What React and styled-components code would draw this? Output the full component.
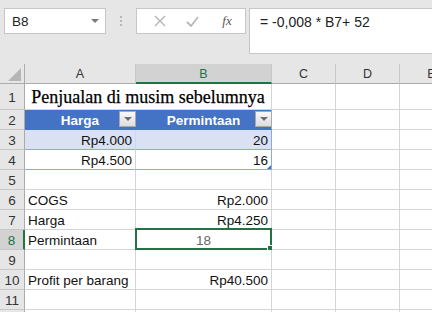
import React from "react";
import styled, { createGlobalStyle } from "styled-components";

const GlobalStyle = createGlobalStyle`
  html, body {
    margin: 0;
    padding: 0;
    background: #ffffff;
    overflow: hidden;
  }
  * { box-sizing: border-box; }
`;

const Window = styled.div`
  width: 432px;
  height: 312px;
  overflow: hidden;
  font-family: "Liberation Sans", Arial, sans-serif;
  background: #ffffff;
`;

const FormulaBar = styled.div`
  height: 64px;
  background: #e6e6e6;
  display: flex;
  align-items: flex-start;
  padding: 8px 0 0 4px;
`;

const NameBox = styled.div`
  width: 102px;
  height: 26px;
  background: #fff;
  border: 1px solid #c6c6c6;
  display: flex;
  align-items: center;
  justify-content: space-between;
  padding: 0 6px 0 7px;
  font-size: 13.5px;
  color: #222;
`;

const DropArrow = styled.span`
  width: 0;
  height: 0;
  border-left: 4px solid transparent;
  border-right: 4px solid transparent;
  border-top: 4px solid #7a7a7a;
`;

const Grip = styled.div`
  width: 30px;
  height: 26px;
  display: flex;
  flex-direction: column;
  align-items: center;
  justify-content: center;
  gap: 2px;

  span {
    width: 2px;
    height: 2px;
    background: #b8b8b8;
  }
`;

const FuncBox = styled.div`
  width: 110px;
  height: 26px;
  background: #fff;
  border: 1px solid #c6c6c6;
  display: flex;
  align-items: center;
  padding-left: 11px;
`;

const FuncButton = styled.span`
  width: ${(p) => p.$w}px;
  display: flex;
  justify-content: center;
  align-items: center;
  color: ${(p) => p.$color || "#b4b4b4"};
  font-family: "Liberation Serif", "Times New Roman", serif;
  font-style: italic;
  font-size: 13px;
`;

const FormulaInput = styled.div`
  margin-left: 3px;
  flex: 1;
  height: 46px;
  background: #fff;
  border: 1px solid #c6c6c6;
  border-right: none;
  padding: 5px 0 0 10px;
  font-size: 14px;
  color: #222;
  white-space: pre;
`;

const Sheet = styled.div`
  display: grid;
  grid-template-columns: 25px 111px 136px 64px 64px 64px;
  grid-template-rows: 20px 26px repeat(11, 20px);
`;

const Corner = styled.div`
  background: #e6e6e6;
  border-right: 1px solid #ababab;
  border-bottom: 1px solid #ababab;
  display: flex;
  justify-content: flex-end;
  align-items: flex-end;
  padding: 0 3px 2px 0;
`;

const CornerTriangle = styled.span`
  width: 0;
  height: 0;
  border-left: 13px solid transparent;
  border-bottom: 13px solid #b5b5b5;
`;

const ColHead = styled.div`
  background: ${(p) => (p.$active ? "#d2d2d2" : "#e6e6e6")};
  color: ${(p) => (p.$active ? "#217346" : "#333")};
  border-right: 1px solid #c8c8c8;
  border-bottom: ${(p) => (p.$active ? "2px solid #217346" : "1px solid #ababab")};
  display: flex;
  align-items: center;
  justify-content: center;
  font-size: 12.5px;
  padding-top: 1px;
  overflow: hidden;
`;

const RowHead = styled.div`
  background: ${(p) => (p.$active ? "#d2d2d2" : "#e6e6e6")};
  color: ${(p) => (p.$active ? "#217346" : "#333")};
  border-right: ${(p) => (p.$active ? "2px solid #217346" : "1px solid #ababab")};
  border-bottom: 1px solid #c8c8c8;
  display: flex;
  align-items: center;
  justify-content: center;
  font-size: 13.5px;
  padding-top: 1px;
`;

const Cell = styled.div`
  position: relative;
  grid-column: span ${(p) => p.$span || 1};
  background: ${(p) => p.$bg || "#fff"};
  color: ${(p) => p.$color || "#111"};
  font-weight: ${(p) => (p.$bold ? 700 : 400)};
  font-size: 13.5px;
  line-height: 19px;
  border-right: 1px solid ${(p) => p.$br || "#d4d4d4"};
  border-bottom: 1px solid ${(p) => p.$bb || "#d4d4d4"};
  text-align: ${(p) => p.$align || "left"};
  padding: 1px 3px 0;
  white-space: nowrap;
`;

const Title = styled(Cell)`
  font-family: "Liberation Serif", "Times New Roman", serif;
  font-size: 18px;
  line-height: 24px;
  color: #000;
  -webkit-text-stroke: 0.25px #000;
`;

const FilterButton = styled.span`
  position: absolute;
  right: -1px;
  top: 1px;
  width: 17px;
  height: 16px;
  background: linear-gradient(#f7f7f7, #dedede);
  border: 1px solid #a8a8a8;
  display: flex;
  align-items: center;
  justify-content: center;

  &::after {
    content: "";
    border-left: 4px solid transparent;
    border-right: 4px solid transparent;
    border-top: 4px solid #6e6e6e;
  }
`;

const TableHandle = styled.span`
  position: absolute;
  right: 0;
  bottom: 0;
  width: 0;
  height: 0;
  border-left: 4px solid transparent;
  border-bottom: 4px solid #4472c4;
`;

const Selection = styled.span`
  position: absolute;
  left: -1px;
  top: -2px;
  right: -1px;
  bottom: -1px;
  border: 2px solid #217346;
  pointer-events: none;
`;

const FillHandle = styled.span`
  position: absolute;
  right: -4px;
  bottom: -4px;
  width: 7px;
  height: 7px;
  background: #217346;
  border: 1px solid #fff;
`;

const columns = ["A", "B", "C", "D", "E"];

const blankCells = (n) =>
  Array.from({ length: n }, (_, i) => <Cell key={"b" + i} />);

export default function App() {
  const tableRows = [
    { n: 3, a: "Rp4.000", b: "20", fill: "#d9e1f2" },
    { n: 4, a: "Rp4.500", b: "16", fill: "#fff", handle: true },
  ];
  const plain = [
    { n: 5 },
    { n: 6, a: "COGS", b: "Rp2.000" },
    { n: 7, a: "Harga", b: "Rp4.250" },
    { n: 8, a: "Permintaan", b: "18", selected: true },
    { n: 9 },
    { n: 10, a: "Profit per barang", b: "Rp40.500" },
    { n: 11 },
    { n: 12, hideNumber: true },
  ];

  return (
    <Window>
      <GlobalStyle />
      <FormulaBar>
        <NameBox>
          B8
          <DropArrow />
        </NameBox>
        <Grip>
          <span />
          <span />
          <span />
        </Grip>
        <FuncBox>
          <FuncButton $w={24}>
            <svg width="12" height="12" viewBox="0 0 12 12">
              <path d="M1 1 L11 11 M11 1 L1 11" stroke="#b0b0b0" strokeWidth="1.2" fill="none" />
            </svg>
          </FuncButton>
          <FuncButton $w={40}>
            <svg width="13" height="11" viewBox="0 0 13 11">
              <path d="M1 6 L5 10 L12 1" stroke="#b8b8b8" strokeWidth="1.8" fill="none" />
            </svg>
          </FuncButton>
          <FuncButton $w={30} $color="#555">
            fx
          </FuncButton>
        </FuncBox>
        <FormulaInput>= -0,008 * B7+ 52</FormulaInput>
      </FormulaBar>

      <Sheet>
        <Corner>
          <CornerTriangle />
        </Corner>
        {columns.map((c) => (
          <ColHead key={c} $active={c === "B"}>
            {c}
          </ColHead>
        ))}

        <RowHead>1</RowHead>
        <Title $span={2} $align="center">
          Penjualan di musim sebelumnya
        </Title>
        {blankCells(3)}

        <RowHead>2</RowHead>
        <Cell $bg="#4472c4" $color="#fff" $bold $align="center" $br="#4472c4" $bb="#4472c4">
          Harga
          <FilterButton />
        </Cell>
        <Cell $bg="#4472c4" $color="#fff" $bold $align="center" $br="#8ea9db" $bb="#4472c4">
          Permintaan
          <FilterButton />
        </Cell>
        {blankCells(3)}

        {tableRows.map((r) => (
          <React.Fragment key={r.n}>
            <RowHead>{r.n}</RowHead>
            <Cell $bg={r.fill} $align="right" $bb="#8ea9db" $br={r.fill === "#fff" ? "#d4d4d4" : "#cdd6ea"}>
              {r.a}
            </Cell>
            <Cell $bg={r.fill} $align="right" $bb="#8ea9db" $br="#8ea9db">
              {r.b}
              {r.handle && <TableHandle />}
            </Cell>
            {blankCells(3)}
          </React.Fragment>
        ))}

        {plain.map((r) => (
          <React.Fragment key={r.n}>
            <RowHead $active={r.selected}>{r.hideNumber ? "" : r.n}</RowHead>
            <Cell>{r.a}</Cell>
            <Cell $align={r.selected ? "center" : "right"} $color={r.selected ? "#666" : "#111"}>
              {r.b}
              {r.selected && (
                <Selection>
                  <FillHandle />
                </Selection>
              )}
            </Cell>
            {blankCells(3)}
          </React.Fragment>
        ))}
      </Sheet>
    </Window>
  );
}
